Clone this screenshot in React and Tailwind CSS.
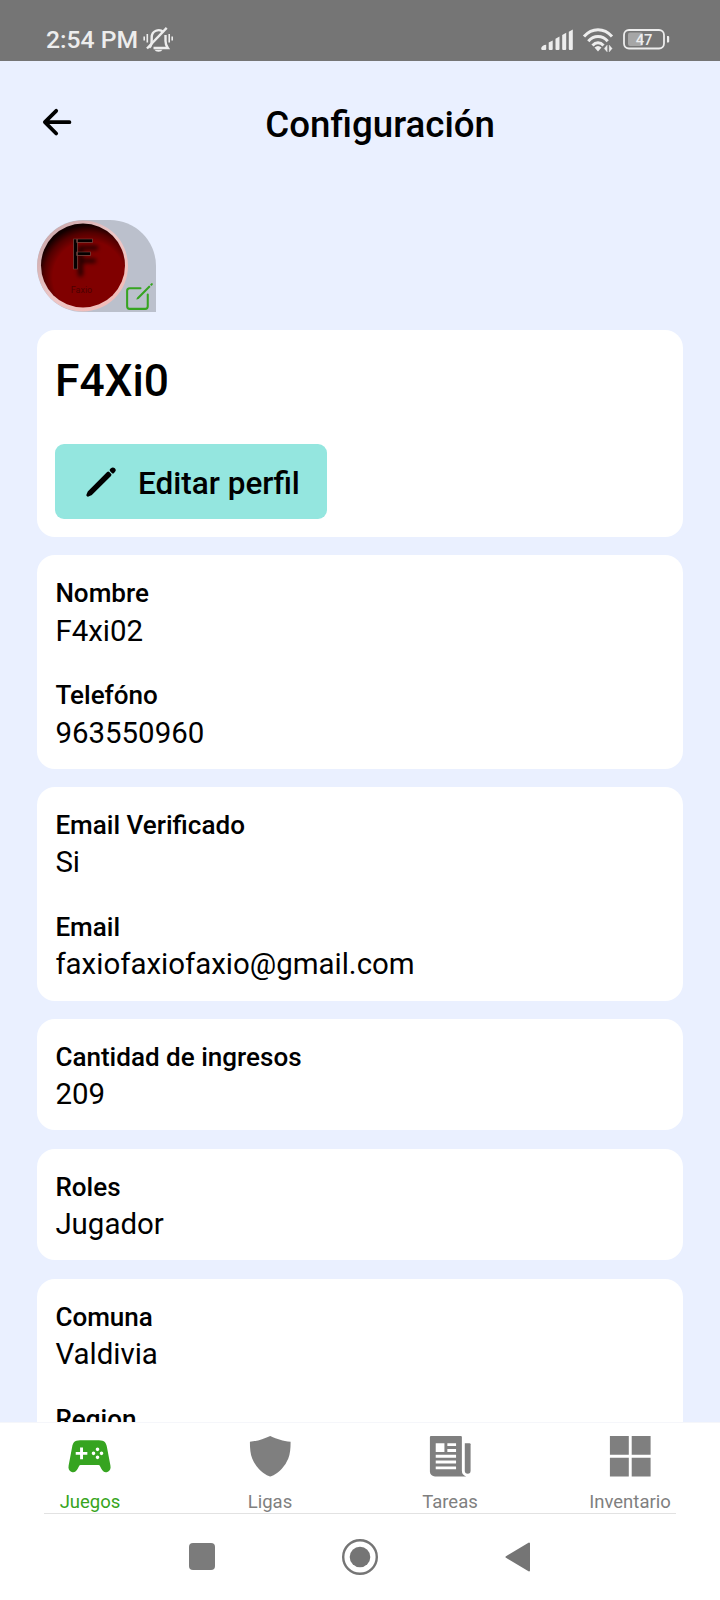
import React from "react";
import {
  IoArrowBack,
  IoCreateOutline,
  IoPencil,
  IoGameControllerSharp,
  IoShieldSharp,
  IoNewspaperSharp,
  IoGridSharp,
} from "react-icons/io5";

function StatusBar() {
  return (
    <div className="flex h-[60.5px] shrink-0 items-start justify-between bg-[#757575] pl-[46px] pr-[50px] text-[#ededed]">
      <div className="flex items-start">
        <span className="mt-[25px] w-[97px] whitespace-nowrap text-[24.700px] leading-[30px] font-medium">2:54 PM</span>
        <svg className="mt-[26px] h-[27px] w-[31px]" viewBox="0 0 31 27" fill="none" stroke="currentColor" strokeWidth="2.400">
          <path d="M6.2 21.5C8.7 19.5 8.7 17.5 8.7 11a7 7 0 0 1 11.7-5M22.500 9v6c0 3.500 1 5.200 2.300 7H10.500" />
          <path d="M23.700 1.800 4 22.500" />
          <path d="M1.200 10.500v4M4.300 8v8.500M26.200 8v8.500M29.200 10.500v4" strokeWidth="1.600" />
          <path d="M11.500 23.800h8a4.200 2.800 0 0 1-8 0z" fill="currentColor" stroke="none" />
        </svg>
      </div>
      <div className="flex items-start">
        <svg className="mt-[29px] mr-[8px] h-[22px] w-[33px]" viewBox="0 0 33 22" fill="currentColor">
          <path d="M1 21q-1-.3-.8-2 1-3 5-3.200V20q0 1-1 1zM7.700 13.500l4-2V20q0 1-1 1h-2q-1 0-1-1zM14.500 9.700l4-2.200V20q0 1-1 1h-2q-1 0-1-1zM21.200 6l4-2.200V20q0 1-1 1h-2q-1 0-1-1zM27.800 2.700 31.800.5V20q0 1-1 1h-2q-1 0-1-1z" />
        </svg>
        <svg className="mt-[28px] mr-[9px] h-[25px] w-[32px]" viewBox="0 0 32 25" fill="none" stroke="currentColor" strokeWidth="3">
          <path d="M2 8.500C10-.5 22-.5 30 8.500" />
          <path d="M6.300 13.200c5.500-6.200 13.900-6.200 19.400 0" />
          <path d="M10.500 17.500c3.300-3.600 7.700-3.600 11 0" />
          <path d="M12.500 19.500q3.500-3 7 0L16 23.500z" fill="currentColor" stroke="none" />
          <path d="M25.200 17v7l-3-3.500zM27.200 17v7l3-3.500z" fill="currentColor" stroke="currentColor" strokeWidth="0.300" />
        </svg>
        <svg className="mt-[28px] h-[22px] w-[47px]" viewBox="0 0 47 22">
          <rect x="1" y="2" width="40" height="18.500" rx="5" fill="none" stroke="currentColor" strokeWidth="1.800" />
          <rect x="5" y="4.500" width="15" height="13.500" rx="2" fill="#a6a6a6" />
          <path d="M44 8h1.200q1 0 1 1v4.500q0 1-1 1H44z" fill="currentColor" />
          <text x="21" y="16.500" textAnchor="middle" fontSize="14.700" fontWeight="500" fill="currentColor">47</text>
        </svg>
      </div>
    </div>
  );
}

function Avatar() {
  return (
    <div className="flex h-[92px] w-[119.300px] items-end overflow-hidden rounded-tl-[46px] rounded-tr-[46px] rounded-bl-[46px] bg-[#bbc0cc]">
      <svg className="h-[92px] w-[91px] shrink-0" viewBox="0 0 91 92">
        <defs>
          <radialGradient id="disc" cx="0.570" cy="0.640" r="0.650">
            <stop offset="0.660" stopColor="#800000" />
            <stop offset="0.820" stopColor="#520000" />
            <stop offset="0.960" stopColor="#120000" />
          </radialGradient>
          <linearGradient id="ring" x1="0" y1="0" x2="1" y2="1">
            <stop offset="0" stopColor="#c3a1a5" />
            <stop offset="0.500" stopColor="#edc6c6" />
            <stop offset="1" stopColor="#f2b9b4" />
          </linearGradient>
        </defs>
        <circle cx="45.500" cy="46" r="45.500" fill="url(#ring)" />
        <circle cx="46" cy="45.500" r="42" fill="url(#disc)" />
        <text x="33" y="48.500" fontSize="43" fill="#050000" stroke="#7a4a42" strokeWidth="0.700" className="drop-shadow-[5px_7px_2px_#200000]">F</text>
        <text x="44.500" y="73" textAnchor="middle" fontSize="9" fill="#4c0000">Faxio</text>
      </svg>
      <IoCreateOutline className="-mb-[1px] -ml-[4.400px] h-[33px] w-[33px] shrink-0 text-[#36a420]" />
    </div>
  );
}

function Field({ label, value }) {
  return (
    <div>
      <div className="text-[26.050px] leading-[36.500px] font-medium">{label}</div>
      <div className="text-[29.450px] leading-[39.500px]">{value}</div>
    </div>
  );
}

function Card({ fields }) {
  return (
    <section className="flex shrink-0 flex-col gap-[26px] rounded-[18px] bg-white px-[18.700px] pt-[20px] pb-[15.600px]">
      {fields.map(([label, value]) => (
        <Field key={label} label={label} value={value} />
      ))}
    </section>
  );
}

const cards = [
  [["Nombre", "F4xi02"], ["Telefóno", "963550960"]],
  [["Email Verificado", "Si"], ["Email", "faxiofaxiofaxio@gmail.com"]],
  [["Cantidad de ingresos", "209"]],
  [["Roles", "Jugador"]],
  [["Comuna", "Valdivia"], ["Region", ""]],
];

const tabs = [
  { label: "Juegos", Icon: IoGameControllerSharp, active: true },
  { label: "Ligas", Icon: IoShieldSharp },
  { label: "Tareas", Icon: IoNewspaperSharp },
  { label: "Inventario", Icon: IoGridSharp },
];

export default function App() {
  return (
    <div className="flex h-[1600px] w-[720px] flex-col overflow-hidden bg-[#eaf0ff] font-[Roboto,sans-serif] text-black">
      <StatusBar />
      <header className="flex h-[124px] shrink-0 items-center pl-[37px]">
        <IoArrowBack className="h-[40.300px] w-[40.300px]" />
        <h1 className="mt-[4px] ml-[188px] text-[36.700px] leading-[44px] font-medium">Configuración</h1>
      </header>
      <main className="flex min-h-0 flex-1 flex-col gap-[18.300px] overflow-hidden px-[36.700px] pt-[35px]">
        <div className="shrink-0"><Avatar /></div>
        <section className="flex h-[207px] shrink-0 flex-col items-start rounded-[18px] bg-white px-[18.300px] pt-[25px]">
          <h2 className="text-[44.300px] leading-[52px] font-medium">F4Xi0</h2>
          <button className="mt-[37px] flex h-[75px] w-[272px] items-center rounded-[9px] bg-[#94e6df] pl-[28px]">
            <IoPencil className="mt-[1px] h-[36px] w-[36px]" />
            <span className="mt-[5px] ml-[19px] whitespace-nowrap text-[31.500px] font-medium">Editar perfil</span>
          </button>
        </section>
        {cards.map((fields) => (
          <Card key={fields[0][0]} fields={fields} />
        ))}
      </main>
      <nav className="grid h-[91px] shrink-0 grid-cols-4 border-t border-[#f5f6fa] bg-white">
        {tabs.map(({ label, Icon, active }) => (
          <div key={label} className={active ? "flex flex-col items-center text-[#36a420]" : "flex flex-col items-center text-[#7f7f7f]"}>
            <Icon className="mt-[9.500px] h-[46.500px] w-[46.500px]" />
            <span className="mt-[12px] text-[18.500px] leading-[22px]">{label}</span>
          </div>
        ))}
      </nav>
      <div className="flex h-[87px] shrink-0 flex-col bg-white px-[44px]">
        <div className="h-px bg-[#e2e2e2]" />
        <div className="mt-[23.500px] flex items-center pl-[144.500px]">
          <div className="h-[26.500px] w-[26.500px] rounded-[4px] bg-[#7b7b7b]" />
          <svg className="ml-[126px] h-[38px] w-[38px]" viewBox="0 0 38 38">
            <circle cx="19" cy="19" r="16.800" fill="none" stroke="#757575" strokeWidth="2.400" />
            <circle cx="19" cy="19" r="10.300" fill="#757575" />
          </svg>
          <svg className="ml-[126px] h-[32px] w-[26px]" viewBox="0 0 26 32">
            <path d="M1.500 16 24 2.500v27z" fill="#757575" stroke="#757575" strokeWidth="2" strokeLinejoin="round" />
          </svg>
        </div>
      </div>
    </div>
  );
}
